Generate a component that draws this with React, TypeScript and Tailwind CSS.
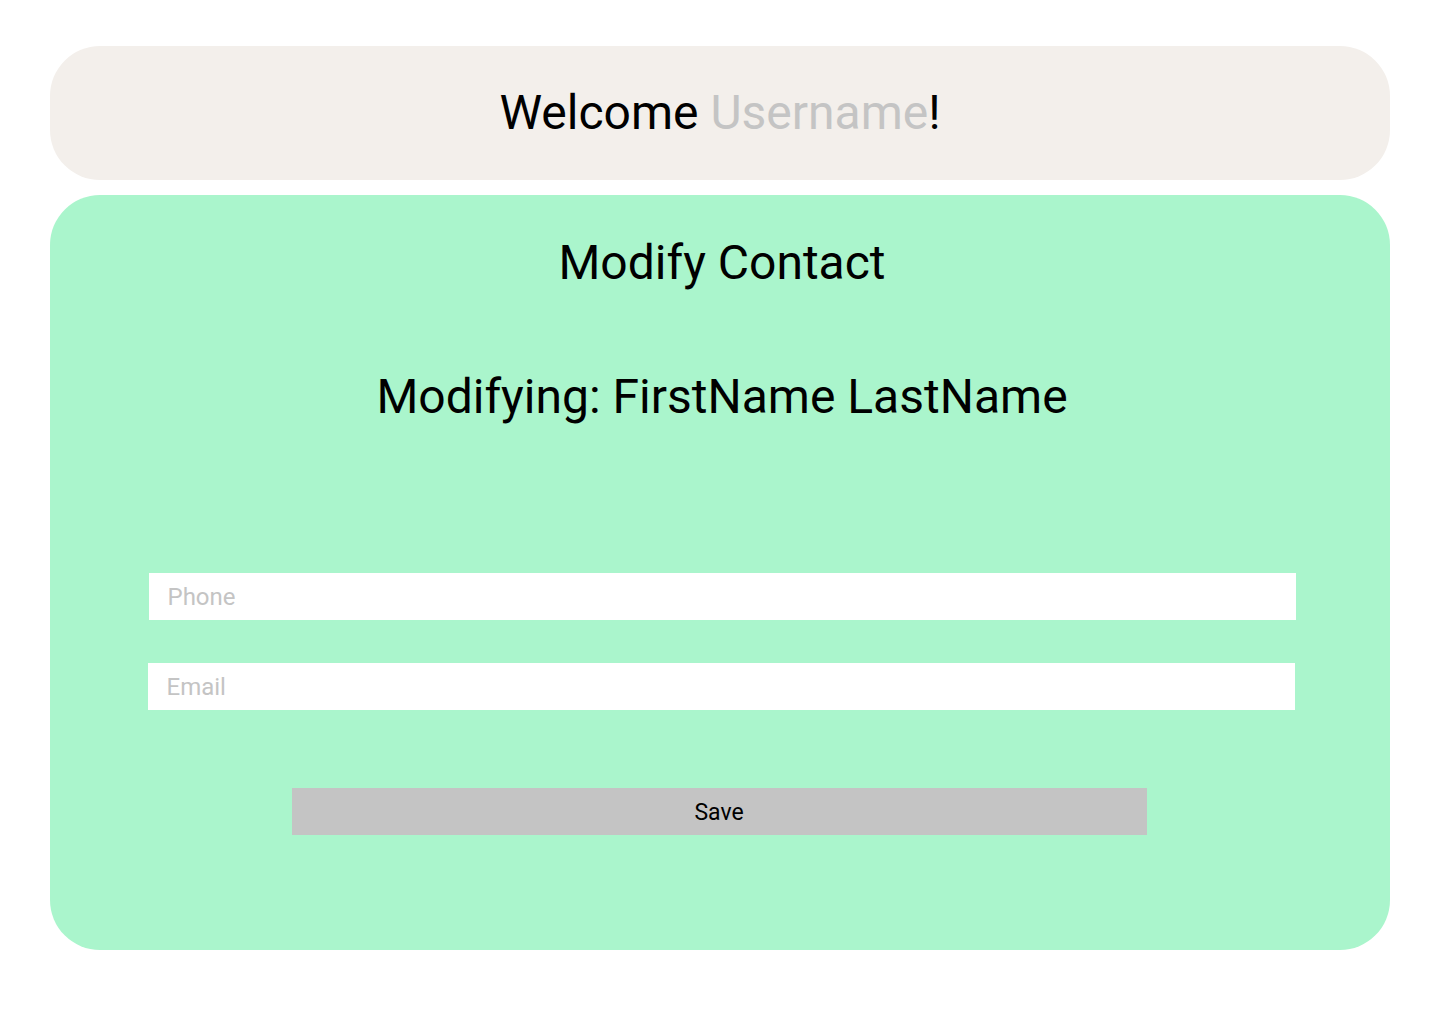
export default function App() {
  return (
    <div className="min-h-[1024px] bg-white px-[50px] pt-[46px] font-['Roboto',sans-serif]">
      <div className="flex h-[134px] items-center justify-center rounded-[50px] bg-[#f3efeb]">
        <h1 className="text-[48px] text-black">
          Welcome <span className="text-[#c4c4c4]">Username</span>!
        </h1>
      </div>
      <div className="mt-[15px] flex h-[755px] flex-col items-center rounded-[50px] bg-[#aaf5cc] pt-[32px]">
        <h2 className="pl-[4px] text-[48px] leading-[72px] text-black">Modify Contact</h2>
        <h3 className="mt-[62px] pl-[4px] text-[48px] leading-[72px] text-black">Modifying: FirstName LastName</h3>
        <form className="mt-[140px] flex w-full flex-col items-center" onSubmit={(e) => e.preventDefault()}>
          <input
            type="text"
            placeholder="Phone"
            className="ml-[4px] h-[47px] w-[1147px] bg-white px-[19px] text-[24px] text-black outline-none placeholder:text-[#c4c4c4]"
          />
          <input
            type="email"
            placeholder="Email"
            className="ml-[2px] mt-[43px] h-[47px] w-[1147px] bg-white px-[19px] text-[24px] text-black outline-none placeholder:text-[#c4c4c4]"
          />
          <button type="submit" className="mr-[2px] mt-[78px] h-[47px] w-[855px] bg-[#c4c4c4] pt-[3px] text-[23px] text-black">
            Save
          </button>
        </form>
      </div>
    </div>
  );
}
